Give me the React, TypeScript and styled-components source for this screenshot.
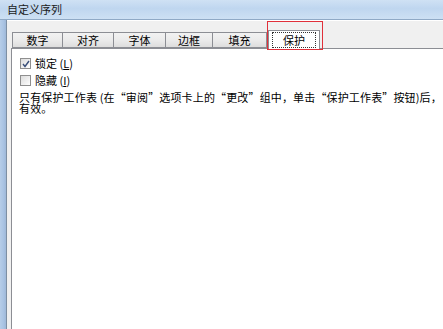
import styled, {createGlobalStyle} from 'styled-components';

const GlobalStyle = createGlobalStyle`
    html, body {
        margin: 0;
        padding: 0;
        background: #ffffff;
    }
    body {
        font-family: "Noto Sans CJK SC", "DejaVu Sans", sans-serif;
        font-size: 11px;
        color: #000000;
    }
`

const Window = styled.div`
    width: 443px;
    height: 329px;
    display: flex;
    flex-direction: column;
    overflow: hidden;
`

const TitleBar = styled.div`
    height: 19px;
    flex-shrink: 0;
    display: flex;
    align-items: center;
    padding-left: 7px;
    background: linear-gradient(180deg, #cfe1f4 0%, #bfd6ef 45%, #cde0f4 100%);
    border-bottom: 1px solid #8fa9c6;
`

const Title = styled.span`
    font-size: 11px;
    line-height: 11px;
    color: #1a1a1a;
`

const Body = styled.div`
    flex: 1;
    display: flex;
`

const FrameEdge = styled.div`
    width: 6px;
    flex-shrink: 0;
    background: linear-gradient(90deg, #b6cde8 0%, #a9c3e3 60%, #9fb8d8 100%);
    border-right: 1px solid #7d8fa3;
`

const Dialog = styled.div`
    flex: 1;
    display: flex;
    flex-direction: column;
    background: #f0f0f0;
    padding-top: 8px;
    padding-left: 4px;
    border-top: 1px solid #ffffff;
`

const TabStrip = styled.div`
    display: flex;
    align-items: flex-end;
    height: 19px;
    padding-left: 1px;
`

const Tab = styled.div<{w: number; active?: boolean}>`
    position: relative;
    width: ${({w}) => w}px;
    height: ${({active}) => (active ? 19 : 16)}px;
    margin: ${({active}) => (active ? '0 -1px -1px 1px' : '0')};
    box-sizing: border-box;
    display: flex;
    align-items: center;
    justify-content: center;
    border: 1px solid #8c8e94;
    border-bottom: ${({active}) => (active ? 'none' : '1px solid #8c8e94')};
    border-left-width: ${({active}) => (active ? 1 : 0)}px;
    background: ${({active}) => active ? '#ffffff' : 'linear-gradient(180deg, #f2f2f2 0%, #ebebeb 50%, #dddddd 100%)'};
    z-index: ${({active}) => (active ? 2 : 1)};

    &:first-child {
        border-left-width: 1px;
    }
`

const TabLabel = styled.span<{focus?: boolean}>`
    padding: 1px 9px 0 9px;
    line-height: 11px;
    outline: ${({focus}) => (focus ? '1px dotted #333333' : 'none')};
    outline-offset: 1px;
`

const Highlight = styled.div`
    position: absolute;
    left: -2px;
    right: -4px;
    top: -10px;
    bottom: -1px;
    border: 1px solid #e0303a;
    pointer-events: none;
`

const TabPage = styled.div`
    flex: 1;
    background: #ffffff;
    border-left: 1px solid #8c8e94;
    border-top: 1px solid #8c8e94;
    padding: 9px 0 0 8px;
    display: flex;
    flex-direction: column;
    gap: 6px;
    overflow: hidden;
`

const CheckRow = styled.label`
    display: flex;
    align-items: center;
    gap: 4px;
    height: 11px;
    line-height: 11px;
`

const Box = styled.span<{checked?: boolean}>`
    width: 9px;
    height: 9px;
    border: 1px solid #8f8f8f;
    background: linear-gradient(135deg, #dcdcdc 0%, #f4f4f4 70%, #ffffff 100%);
    display: flex;
    align-items: center;
    justify-content: center;
`

const Paragraph = styled.p`
    margin: 0 0 0 -1px;
    line-height: 11px;
    letter-spacing: 0.15px;
    white-space: nowrap;
`

const tabs = [
    {label: '数字', w: 51},
    {label: '对齐', w: 51},
    {label: '字体', w: 52},
    {label: '边框', w: 47},
    {label: '填充', w: 54},
]

const Check = () => (
    <svg width="8" height="8" viewBox="0 0 8 8">
        <path d="M1 4 L3 6.5 L7 1" fill="none" stroke="#3a4f7a" strokeWidth="1.4" />
    </svg>
)

const App = () => {
    return (
        <Window>
            <GlobalStyle />
            <TitleBar>
                <Title>自定义序列</Title>
            </TitleBar>
            <Body>
                <FrameEdge />
                <Dialog>
                    <TabStrip>
                        {tabs.map((t) => (
                            <Tab key={t.label} w={t.w}>
                                <TabLabel>{t.label}</TabLabel>
                            </Tab>
                        ))}
                        <Tab w={52} active>
                            <TabLabel focus>保护</TabLabel>
                            <Highlight />
                        </Tab>
                    </TabStrip>
                    <TabPage>
                        <CheckRow>
                            <Box checked><Check /></Box>
                            <span>锁定 (<u>L</u>)</span>
                        </CheckRow>
                        <CheckRow>
                            <Box />
                            <span>隐藏 (<u>I</u>)</span>
                        </CheckRow>
                        <Paragraph>
                            只有保护工作表 (在“审阅”选项卡上的“更改”组中，单击“保护工作表”按钮)后，
                            <br />
                            有效。
                        </Paragraph>
                    </TabPage>
                </Dialog>
            </Body>
        </Window>
    );
};

export default App;
